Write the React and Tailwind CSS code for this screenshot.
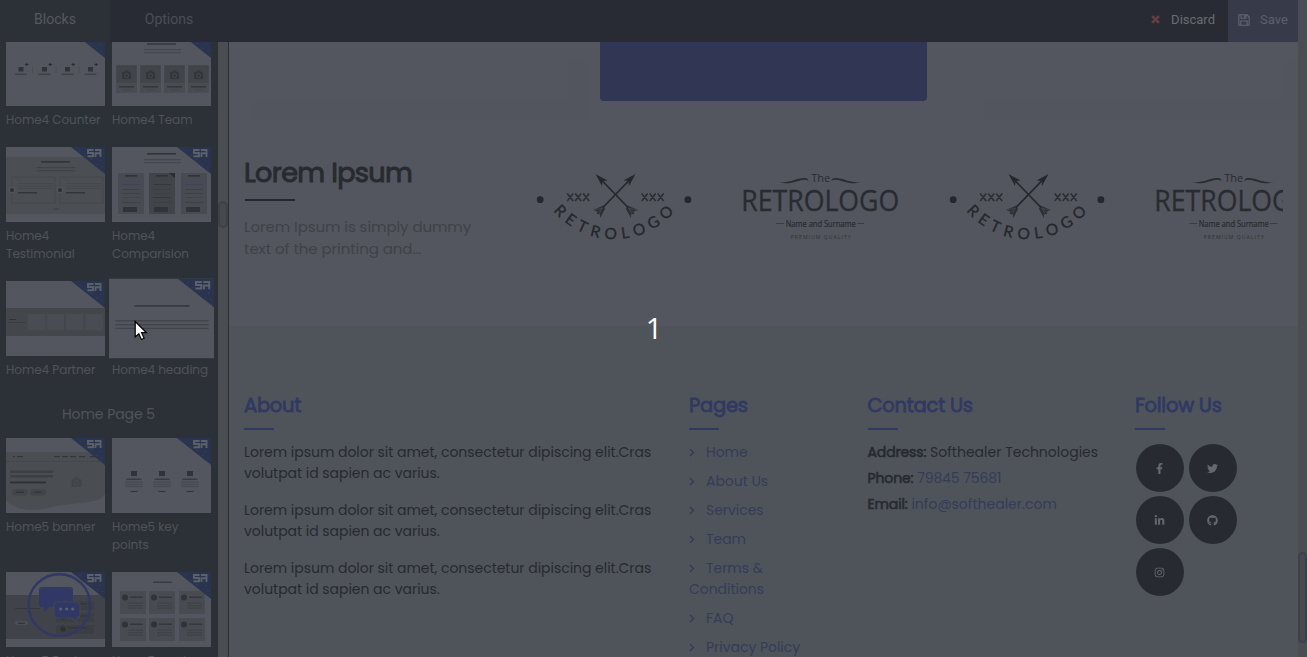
import React from "react";
import { FaFacebookF, FaTwitter, FaLinkedinIn, FaGithub, FaInstagram } from "react-icons/fa";

const Bars = ({ rows, fill = "#3f4349" }) =>
  rows.map(([x, y, w, h = 1.2], i) => <rect key={i} x={x} y={y} width={w} height={h} fill={fill} />);

const Camera = ({ x, y, s = 1, fill = "#33363b" }) => (
  <g transform={`translate(${x} ${y}) scale(${s})`}>
    <path d="M-4.5-3h2l1-1.5h3l1 1.5h2v7h-9z" fill={fill} />
    <circle cy=".5" r="2" fill="none" stroke="#4b4e54" strokeWidth=".8" />
  </g>
);

function Counter() {
  return [15, 38.5, 61.5, 84.5].map((x) => (
    <g key={x}>
      <rect x={x - 2.5} y="36" width="5" height="4.5" fill="#303338" />
      <path d={`M${x + 4} 33.5h3.4M${x + 5.7} 32v3`} stroke="#292c31" strokeWidth="1" />
      <Bars rows={[[x - 6, 42.5, 12, 1.6]]} />
      {x < 80 && <path d={`M${x + 11.5} 35v7`} stroke="#484b52" strokeWidth=".8" />}
    </g>
  ));
}
function Team() {
  return (
    <>
      <Bars rows={[[35, 12, 29, 2]]} fill="#3a3d43" />
      <Bars rows={[[32, 18, 37], [32, 21, 37]]} fill="#464950" />
      {[4, 28, 52, 76].map((x) => (
        <g key={x}>
          <rect x={x} y="34" width="21" height="28" fill="#494c52" />
          <rect x={x + 0.5} y="34.5" width="20" height="17" fill="#414449" />
          <Camera x={x + 10.5} y={44} />
          <Bars rows={[[x + 3, 55, 15, 1.6]]} fill="#34373c" />
          <Bars rows={[[x + 6, 58.5, 9, 1]]} fill="#42454a" />
        </g>
      ))}
    </>
  );
}
function Testimonial() {
  return (
    <>
      <rect y="10" width="99" height="57" fill="#4b4e53" />
      <Bars rows={[[35, 14, 29, 1.6]]} fill="#303338" />
      <Bars rows={[[31, 20, 38], [31, 23, 38]]} />
      {[6, 54].map((x) => (
        <g key={x}>
          <rect x={x} y="30" width="43" height="26" fill="none" stroke="#42454b" strokeWidth=".7" />
          <circle cx={x} cy="43" r="3.6" fill="#505359" />
          <rect x={x - 1.7} y="41.3" width="3.5" height="3.5" fill="#2d3035" />
          <Bars rows={[[x + 6, 36, 35, 1], [x + 6, 38.5, 35, 1], [x + 6, 41, 35, 1]]} fill="#44474d" />
          <Bars rows={[[x + 6, 45, 19, 1.4]]} fill="#313439" />
        </g>
      ))}
      <Bars rows={[[48, 61, 5, 2]]} fill="#43464b" />
    </>
  );
}
function Comparision() {
  return (
    <>
      <Bars rows={[[35, 6, 29, 1.6]]} fill="#303338" />
      <Bars rows={[[32, 12, 37], [32, 15, 37]]} fill="#44474d" />
      {[6, 37, 69].map((x, i) => (
        <g key={x}>
          <rect x={x} y="26" width="26" height="41" fill={i === 1 ? "#414449" : "#484b52"} />
          <Bars rows={[[x + 7, 28, 12, 1.6], [x + 5, 60, 14, 5]]} fill="#303338" />
          <Bars rows={[[x + 4, 37, 18, 0.9], [x + 4, 50, 18, 0.9]]} fill={i === 1 ? "#34373c" : "#394363"} />
          <Bars rows={[[x + 4, 42, 18, 0.9], [x + 4, 46, 18, 0.9], [x + 4, 55, 18, 0.9]]} fill="#3d4046" />
        </g>
      ))}
      <path d="M57 26h6v5z" fill="#292c31" />
    </>
  );
}
function Partner() {
  return (
    <>
      <rect y="27" width="99" height="28" fill="#43464b" />
      {[22, 40.5, 60, 79.5].map((x) => (
        <rect key={x} x={x} y="33" width="17.5" height="16.5" fill="#494c53" />
      ))}
      <Bars rows={[[3, 38, 7, 1]]} fill="#303338" />
      <Bars rows={[[2, 41, 18, 0.8]]} fill="#383b40" />
    </>
  );
}
function Heading() {
  return (
    <>
      <Bars rows={[[24, 25, 52, 1.3]]} fill="#303338" />
      <Bars rows={[[6, 39, 88, 1.3], [6, 42.7, 88, 1.3], [6, 46.2, 88, 1.3]]} fill="#41444b" />
    </>
  );
}
function Banner() {
  return (
    <>
      <path d="M0 14h99v42C92 66 80 63 50 68 32 74 10 74 0 62z" fill="#4a4d51" />
      <path d="M0 23.5h99" stroke="#3e4146" strokeWidth=".8" strokeDasharray="1.5 1" />
      <Bars rows={[[7, 18, 2], [11, 18, 6], [48, 18, 6], [56, 18, 6], [64, 18, 6], [73, 18, 6], [84, 18, 6]]} fill="#33363b" />
      <Bars rows={[[4, 32.5, 43, 2.5], [4, 37, 43, 2.5]]} fill="#3c3f44" />
      <Bars rows={[[4, 43.5, 36, 1.8]]} fill="#2d3035" />
      {[6, 24].map((x) => (
        <g key={x}>
          <rect x={x} y="51" width="16" height="6.5" rx="3.2" fill="#424549" />
          <Bars rows={[[x + 4, 53.7, 8, 1]]} fill="#2d3035" />
        </g>
      ))}
      <Camera x={70.5} y={44.5} s={1.1} fill="#414449" />
    </>
  );
}
function KeyPoints() {
  return [22, 50, 78].map((x) => (
    <g key={x}>
      <rect x={x - 3} y="33" width="6" height="5" fill="#303338" />
      <Bars rows={[[x - 7.5, 40.5, 15, 1.6]]} fill="#383b40" />
      <Bars rows={[[x - 9, 43.5, 18], [x - 9, 45.7, 18], [x - 9, 47.9, 18]]} fill="#464950" />
      <Bars rows={[[x - 3.5, 53, 7, 1]]} fill="#2d3035" />
    </g>
  ));
}
function Features() {
  return (
    <>
      <rect y="23" width="99" height="44" fill="#404349" />
      <Bars rows={[[9, 36, 25, 1]]} fill="#33363b" />
      <rect x="9" y="49" width="13" height="4" rx="2" fill="#4b4e53" />
      <Bars rows={[[12, 50.7, 7, 1]]} fill="#292c31" />
      {[29, 41, 53].map((y) => (
        <g key={y}>
          <rect x="50" y={y} width="38" height="9" fill="#3b3e43" />
          <circle cx="57" cy={y + 4} r="2.6" fill="#2d3035" />
          <Bars rows={[[62, y + 2, 19, 1.5]]} fill="#33363b" />
        </g>
      ))}
    </>
  );
}
function Services() {
  return (
    <>
      <Bars rows={[[41, 9.5, 19, 1.5]]} fill="#383b40" />
      {[19, 46].map((y) =>
        [8, 37, 67].map((x) => (
          <g key={`${x}-${y}`}>
            <rect x={x} y={y} width="26" height="23" fill="#484b51" />
            <circle cx={x + 5} cy={y + 6.5} r="3" fill="#303338" />
            <Bars rows={[[x + 10, y + 5.5, 13, 1.5]]} fill="#34373c" />
            <Bars rows={[[x + 8, y + 11.5, 15], [x + 8, y + 14, 15], [x + 8, y + 16.5, 15]]} fill="#3f4247" />
          </g>
        ))
      )}
    </>
  );
}

function Thumb({ name, art: Art, active }) {
  return (
    <div className="w-[99px]">
      <svg viewBox="0 0 99 75" className={`block h-[75px] w-[99px] bg-[#53565e] ${active ? "scale-[1.06]" : ""}`}>
        <Art />
        <path d="M65 0h34v27z" fill="#2a344e" />
        <path d="M88 2v1M94 13v1M79 8v1M96 19v1M85 12v1M91 17v1M74 3v1" stroke="#3a4663" strokeWidth=".8" />
        <path d="M87.500 3h-5.500v3h5v3.200h-5.500M89.500 10V6.300h5M89 3h5.500v7" fill="none" stroke="#5b606a" strokeWidth="1.900" />
      </svg>
      <div className="mt-[5px] -mb-px w-[103px] pr-1 text-[12px] leading-[18px] tracking-[-0.05px] text-[#4f5357]">{name}</div>
    </div>
  );
}

function ThumbRow({ children }) {
  return <div className="mb-[19px] flex shrink-0 gap-[7px] pl-1.5">{children}</div>;
}

function ChatBubble() {
  return (
    <svg viewBox="0 0 66 66" className="absolute left-[26px] top-[572px] size-[66px]">
      <circle cx="33.300" cy="33" r="30.800" fill="none" stroke="#313865" strokeWidth="2.400" />
      <path d="M16 15h28a3 3 0 0 1 3 3v14a3 3 0 0 1-3 3H24l-6 5v-5h-2a3 3 0 0 1-3-3V18a3 3 0 0 1 3-3z" fill="#313865" />
      <path d="M31 30h20a3 3 0 0 1 3 3v10a3 3 0 0 1-3 3v4l-5-4H31a3 3 0 0 1-3-3V33a3 3 0 0 1 3-3z" fill="#313865" stroke="#43464d" strokeWidth="1.200" />
      <g fill="#5b5f70"><circle cx="34.700" cy="37" r="1.600" /><circle cx="40.700" cy="37" r="1.600" /><circle cx="46.700" cy="37" r="1.600" /></g>
    </svg>
  );
}

function Sidebar() {
  return (
    <aside className="flex w-[218px] shrink-0 flex-col overflow-hidden bg-[#2c3137]">
      <div className="-mt-[11px] flex flex-col">
        <ThumbRow><Thumb name="Home4 Counter" art={Counter} /><Thumb name="Home4 Team" art={Team} /></ThumbRow>
        <ThumbRow><Thumb name="Home4 Testimonial" art={Testimonial} /><Thumb name="Home4 Comparision" art={Comparision} /></ThumbRow>
        <ThumbRow><Thumb name="Home4 Partner" art={Partner} /><Thumb name="Home4 heading" art={Heading} active /></ThumbRow>
        <div className="h-[41px] pr-px pt-[7px] text-center text-sm leading-5 tracking-[-0.05px] text-[#505458]">Home Page 5</div>
        <ThumbRow><Thumb name="Home5 banner" art={Banner} /><Thumb name="Home5 key points" art={KeyPoints} /></ThumbRow>
        <ThumbRow><Thumb name="Home5 Features" art={Features} /><Thumb name="Home5 services" art={Services} /></ThumbRow>
      </div>
    </aside>
  );
}

function ArrowLogo({ id }) {
  return (
    <svg viewBox="0 0 206 110" className="h-[110px] w-[206.4px] shrink-0" fill="#24272c">
      <path id={id} d="M41.400 60.200A80 80 0 0 0 164.600 60.200" fill="none" />
      <text fontFamily="Lato, sans-serif" fontSize="15.500" stroke="#24272c" strokeWidth=".3">
        <textPath href={`#${id}`} startOffset="1" textLength="137">RETROLOGO</textPath>
      </text>
      <circle cx="29" cy="49.700" r="3.400" />
      <circle cx="176.700" cy="49.700" r="3.400" />
      <path
        d="M56 43.500l6 7.500M62 43.500L56 51M64 43.500l6 7.500M70 43.500L64 51M72 43.500l6 7.500M78 43.500L72 51M130.500 43.500l6 7.500M136.500 43.500l-6 7.500M138.500 43.500l6 7.500M144.500 43.500l-6 7.500M146.500 43.500l6 7.500M152.500 43.500l-6 7.500"
        stroke="#2a2d32" strokeWidth="1.500"
      />
      {[1, -1].map((d) => (
        <g key={d} transform={`translate(104.300 44) scale(${d} 1)`}>
          <path d="M16-16L-15 16" stroke="#24272c" strokeWidth="1.700" />
          <path d="M20-20L8-13.500l5 .5 .5 5z" />
          <path d="M-12 11.500L-22.500 16l3.500 1 .5 3 3 .5 0 3.500 5-9z" opacity=".85" />
          <path d="M-13 14l-7 6M-13 14l-4 7M-13 14l-8 2" stroke="#53565e" strokeWidth=".5" />
        </g>
      ))}
    </svg>
  );
}

function WordLogo() {
  return (
    <svg viewBox="0 0 206 110" className="h-[110px] w-[206.4px] shrink-0" fill="#282b30" fontFamily="'Open Sans', sans-serif">
      <text x="94" y="32" fontSize="11.500" textLength="19" lengthAdjust="spacingAndGlyphs">The</text>
      <path d="M61 31.500c10 3 18-4 27-3.500 2 0 3 1.500 3.500 3-6-4-14 3-24 2.300zM144.500 31.500c-10 3-18-4-27-3.500-2 0-3 1.500-3.500 3 6-4 14 3 24 2.300z" />
      <text x="24" y="61" fontSize="29" textLength="158" lengthAdjust="spacingAndGlyphs" stroke="#282b30" strokeWidth=".3">RETROLOGO</text>
      <path d="M59 73.500h8M140 73.500h7" stroke="#33363b" strokeWidth=".8" />
      <text x="68.500" y="76.500" fontSize="8.800" textLength="70" lengthAdjust="spacingAndGlyphs" stroke="#282b30" strokeWidth=".2">Name and Surname</text>
      <text x="73.500" y="88.500" fontSize="5" textLength="60" fill="#2e3136">PREMIUM QUALITY</text>
    </svg>
  );
}

function ColumnTitle({ children }) {
  return (
    <h4 className="mb-[11px] h-[37px] text-[19.5px] leading-[26px] tracking-[-0.25px] text-[#313962] [-webkit-text-stroke:0.8px_#313962]">
      {children}
      <span className="mt-[9px] block h-0.5 w-[30px] bg-[#313962]" />
    </h4>
  );
}

function PageLink({ children }) {
  return (
    <li className="mb-2">
      <svg viewBox="0 0 8 9" className="mr-[9px] inline h-[9px] w-2 align-[0px]">
        <path d="M1 1l3.500 3.500L1 8" fill="none" stroke="#333a55" strokeWidth="1.300" />
      </svg>
      {children}
    </li>
  );
}

const Label = ({ children }) => (
  <b className="font-normal tracking-[-0.13px] [-webkit-text-stroke:0.6px_#262a2f]">{children}</b>
);

function Footer() {
  const para = "Lorem ipsum dolor sit amet, consectetur dipiscing elit.Cras volutpat id sapien ac varius.";
  return (
    <footer className="grid flex-1 grid-cols-[445px_178.5px_267.5px_1fr] bg-[#4f545b] pl-[15px] pt-[67px] text-sm leading-[21px] text-[#262a2f]">
      <div>
        <ColumnTitle>About</ColumnTitle>
        <div className="pt-px tracking-[-0.035px]">
          {[0, 1, 2].map((i) => <p key={i} className="mb-4 w-[415px]">{para}</p>)}
        </div>
      </div>
      <div>
        <ColumnTitle>Pages</ColumnTitle>
        <ul className="w-[120px] pt-px tracking-[-0.035px] text-[#343c58]">
          <PageLink>Home</PageLink>
          <PageLink>About Us</PageLink>
          <PageLink>Services</PageLink>
          <PageLink>Team</PageLink>
          <PageLink>Terms &amp;<br />Conditions</PageLink>
          <PageLink>FAQ</PageLink>
          <PageLink>Privacy Policy</PageLink>
        </ul>
      </div>
      <div>
        <ColumnTitle>Contact Us</ColumnTitle>
        <div className="-mt-[2px] leading-[26px]">
          <div><Label>Address:</Label> Softhealer Technologies</div>
          <div><Label>Phone:</Label> <span className="tracking-[-0.1px] text-[#343c58]">79845 75681</span></div>
          <div><Label>Email:</Label> <span className="text-[#343c58]">info@softhealer.com</span></div>
        </div>
      </div>
      <div>
        <ColumnTitle>Follow Us</ColumnTitle>
        <div className="ml-px mt-[14px] flex w-[120px] flex-wrap gap-x-[5px] gap-y-1">
          {[FaFacebookF, FaTwitter, FaLinkedinIn, FaGithub, FaInstagram].map((Icon, i) => (
            <span key={i} className="flex size-12 items-center justify-center rounded-full bg-[#272b31] text-[#65696e]">
              <Icon className="mr-px size-[11px]" />
            </span>
          ))}
        </div>
      </div>
    </footer>
  );
}

function Content() {
  return (
    <main className="flex w-[1069px] shrink-0 flex-col overflow-hidden bg-[#53565e]">
      <div className="flex h-[59px] shrink-0 pl-[3px]">
        <div className="mr-[31px] w-[337px] rounded-b bg-[#53565e] shadow-[20px_20px_0_#52555d]" />
        <div className="mr-[38px] w-[327px] rounded-b bg-[#313654]" />
        <div className="w-[318px] rounded-b bg-[#53565e] shadow-[20px_20px_0_#52555d]" />
      </div>
      <section className="flex h-[225px] shrink-0 pl-[15px]">
        <div className="w-[267px] shrink-0 pt-[53px]">
          <h2 className="text-[27px] leading-[38px] tracking-[-0.6px] text-[#272b30] [-webkit-text-stroke:1px_#272b30]">Lorem Ipsum</h2>
          <div className="ml-px mt-[7px] h-0.5 w-[50px] bg-[#24282c]" />
          <p className="mt-[15px] w-[250px] text-[15px] leading-[22px] tracking-[-0.07px] text-[#3e4247]">Lorem Ipsum is simply dummy text of the printing and...</p>
        </div>
        <div className="flex w-[772px] overflow-hidden pt-[49px]">
          <ArrowLogo id="arc-a" />
          <WordLogo />
          <ArrowLogo id="arc-b" />
          <WordLogo />
        </div>
      </section>
      <Footer />
    </main>
  );
}

export default function App() {
  return (
    <div className="relative flex h-[657px] w-[1307px] overflow-hidden bg-[#53565e] font-['Poppins','Inter',sans-serif]">
      <div className="flex w-[1298px] flex-col">
        <header className="flex h-[42px] shrink-0 bg-[#282b33] font-['Roboto',sans-serif] text-sm leading-[38px]">
          <div className="w-[110px] bg-[#2c3137] text-center text-[#56595d]">Blocks</div>
          <div className="w-[118px] text-center text-[#4b4e55]">Options</div>
          <div className="ml-auto flex items-center pb-[3px] pr-[13px] text-[13px] text-[#696c72]">
            <svg viewBox="0 0 10 10" className="mr-[11px] size-[9px]"><path d="M1.200 1.200l7.600 7.600M8.800 1.200L1.200 8.800" stroke="#653f3e" strokeWidth="3" /></svg>
            Discard
          </div>
          <div className="flex w-[70px] items-center bg-[#373b49] pb-[3px] pl-2.5 text-[13px] text-[#5c606c]">
            <svg viewBox="0 0 12 12" className="mr-2.5 size-3" fill="none" stroke="#626671" strokeWidth="1.100"><path d="M.8.8h8.200l2.200 2.200v8.200H.8zM3 .8v3.500h5V.8M2.800 11V7h6.400v4M6.500 1v2.500" /></svg>
            Save
          </div>
        </header>
        <div className="flex min-h-0 flex-1">
          <Sidebar />
          <div className="w-2.5 shrink-0 bg-[#4a4e52] px-0">
            <div className="mt-[159px] h-[27px] rounded-full border-2 border-[#3e4247] bg-[#464a4f]" />
          </div>
          <div className="w-px shrink-0 bg-[#2a2d32]" />
          <Content />
        </div>
      </div>
      <div className="w-[9px] bg-[#4a4d51]">
        <div className="mt-[552px] h-[91px] rounded-full border-2 border-[#3c404b] bg-[#464a4f]" />
      </div>
      <ChatBubble />
      <svg viewBox="0 0 14 21" className="absolute left-[134px] top-[320px] h-[21px] w-[14px]">
        <path d="M1.200 1.500v15.500l3.600-3.300 2.600 5.800 2.700-1.200-2.500-5.600h4.900z" fill="#fff" stroke="#000" strokeWidth="1.200" />
      </svg>
      <div className="absolute left-[644px] top-[308px] w-5 text-center font-['Open_Sans',sans-serif] text-[29px] leading-10 text-white">1</div>
    </div>
  );
}
